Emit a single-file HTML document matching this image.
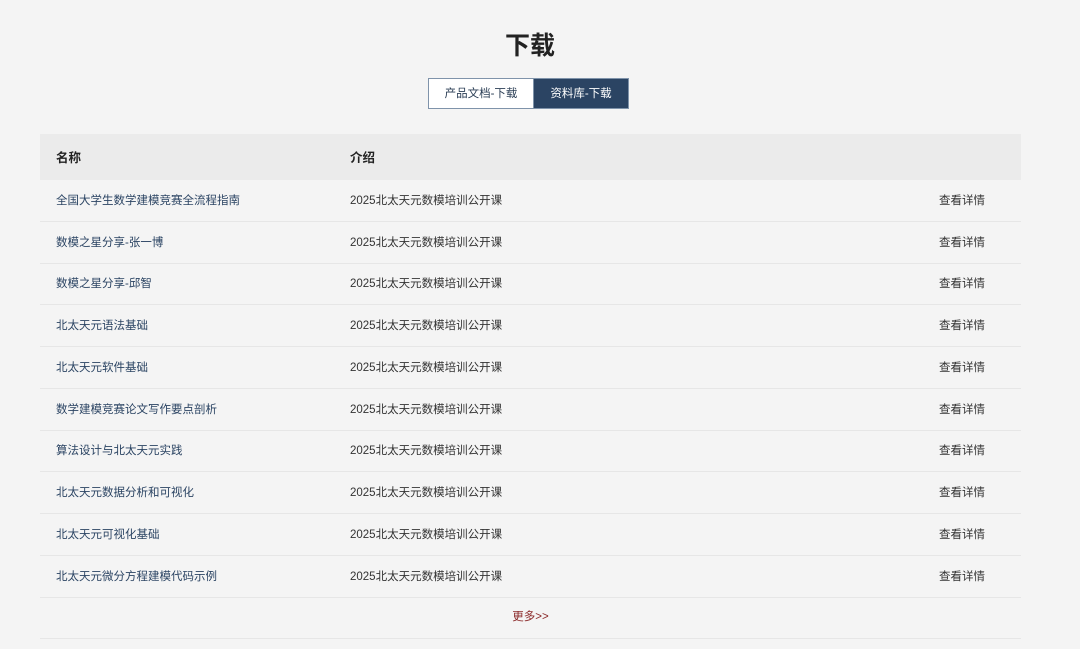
<!DOCTYPE html>
<html><head><meta charset="utf-8"><style>
body{margin:0;background:#f4f4f4;font-family:"Liberation Sans","Noto Sans CJK SC",sans-serif;width:1080px;height:649px;overflow:hidden;position:relative}
h1{position:absolute;top:29px;left:0;width:1060px;text-align:center;margin:0;font-size:25px;line-height:34px;color:#222;font-weight:bold}
.tabs{position:absolute;left:428px;top:78px;display:flex;height:31px}
.tab{box-sizing:border-box;height:31px;line-height:30px;font-size:11.5px;text-align:center;border:1px solid #7f93aa}
.t1{width:106px;background:#fff;color:#2b3e55}
.t2{width:95px;background:#2b4463;color:#fff;border-left:none}
.hdr{position:absolute;left:40px;top:134px;width:981px;height:46px;background:#ebebeb;font-size:12.5px;font-weight:bold;color:#222}
.hdr span,.row span{position:absolute;top:1px}
.row{position:absolute;left:40px;width:981px;height:41.7px;border-bottom:1px solid #e6e6e6;font-size:11.5px;box-sizing:border-box}
.a{left:16px;color:#2b4463}.b{left:310px;color:#333}.c{left:899px;color:#333}
.more{position:absolute;left:40px;top:597px;width:981px;height:42px;border-bottom:1px solid #e6e6e6;text-align:center;font-size:11.5px;line-height:41px;color:#8b2a2a;box-sizing:border-box}
</style></head><body>
<h1>下载</h1>
<div class="tabs"><div class="tab t1">产品文档-下载</div><div class="tab t2">资料库-下载</div></div>
<div class="hdr"><span style="left:16px;line-height:46px">名称</span><span style="left:310px;line-height:46px">介绍</span></div>
<div class="row" style="top:180px"><span class="a" style="line-height:41px">全国大学生数学建模竞赛全流程指南</span><span class="b" style="line-height:41px">2025北太天元数模培训公开课</span><span class="c" style="line-height:41px">查看详情</span></div>
<div class="row" style="top:222px"><span class="a" style="line-height:41px">数模之星分享-张一博</span><span class="b" style="line-height:41px">2025北太天元数模培训公开课</span><span class="c" style="line-height:41px">查看详情</span></div>
<div class="row" style="top:263px"><span class="a" style="line-height:41px">数模之星分享-邱智</span><span class="b" style="line-height:41px">2025北太天元数模培训公开课</span><span class="c" style="line-height:41px">查看详情</span></div>
<div class="row" style="top:305px"><span class="a" style="line-height:41px">北太天元语法基础</span><span class="b" style="line-height:41px">2025北太天元数模培训公开课</span><span class="c" style="line-height:41px">查看详情</span></div>
<div class="row" style="top:347px"><span class="a" style="line-height:41px">北太天元软件基础</span><span class="b" style="line-height:41px">2025北太天元数模培训公开课</span><span class="c" style="line-height:41px">查看详情</span></div>
<div class="row" style="top:389px"><span class="a" style="line-height:41px">数学建模竞赛论文写作要点剖析</span><span class="b" style="line-height:41px">2025北太天元数模培训公开课</span><span class="c" style="line-height:41px">查看详情</span></div>
<div class="row" style="top:430px"><span class="a" style="line-height:41px">算法设计与北太天元实践</span><span class="b" style="line-height:41px">2025北太天元数模培训公开课</span><span class="c" style="line-height:41px">查看详情</span></div>
<div class="row" style="top:472px"><span class="a" style="line-height:41px">北太天元数据分析和可视化</span><span class="b" style="line-height:41px">2025北太天元数模培训公开课</span><span class="c" style="line-height:41px">查看详情</span></div>
<div class="row" style="top:514px"><span class="a" style="line-height:41px">北太天元可视化基础</span><span class="b" style="line-height:41px">2025北太天元数模培训公开课</span><span class="c" style="line-height:41px">查看详情</span></div>
<div class="row" style="top:556px"><span class="a" style="line-height:41px">北太天元微分方程建模代码示例</span><span class="b" style="line-height:41px">2025北太天元数模培训公开课</span><span class="c" style="line-height:41px">查看详情</span></div>
<div class="more">更多&gt;&gt;</div>
</body></html>
